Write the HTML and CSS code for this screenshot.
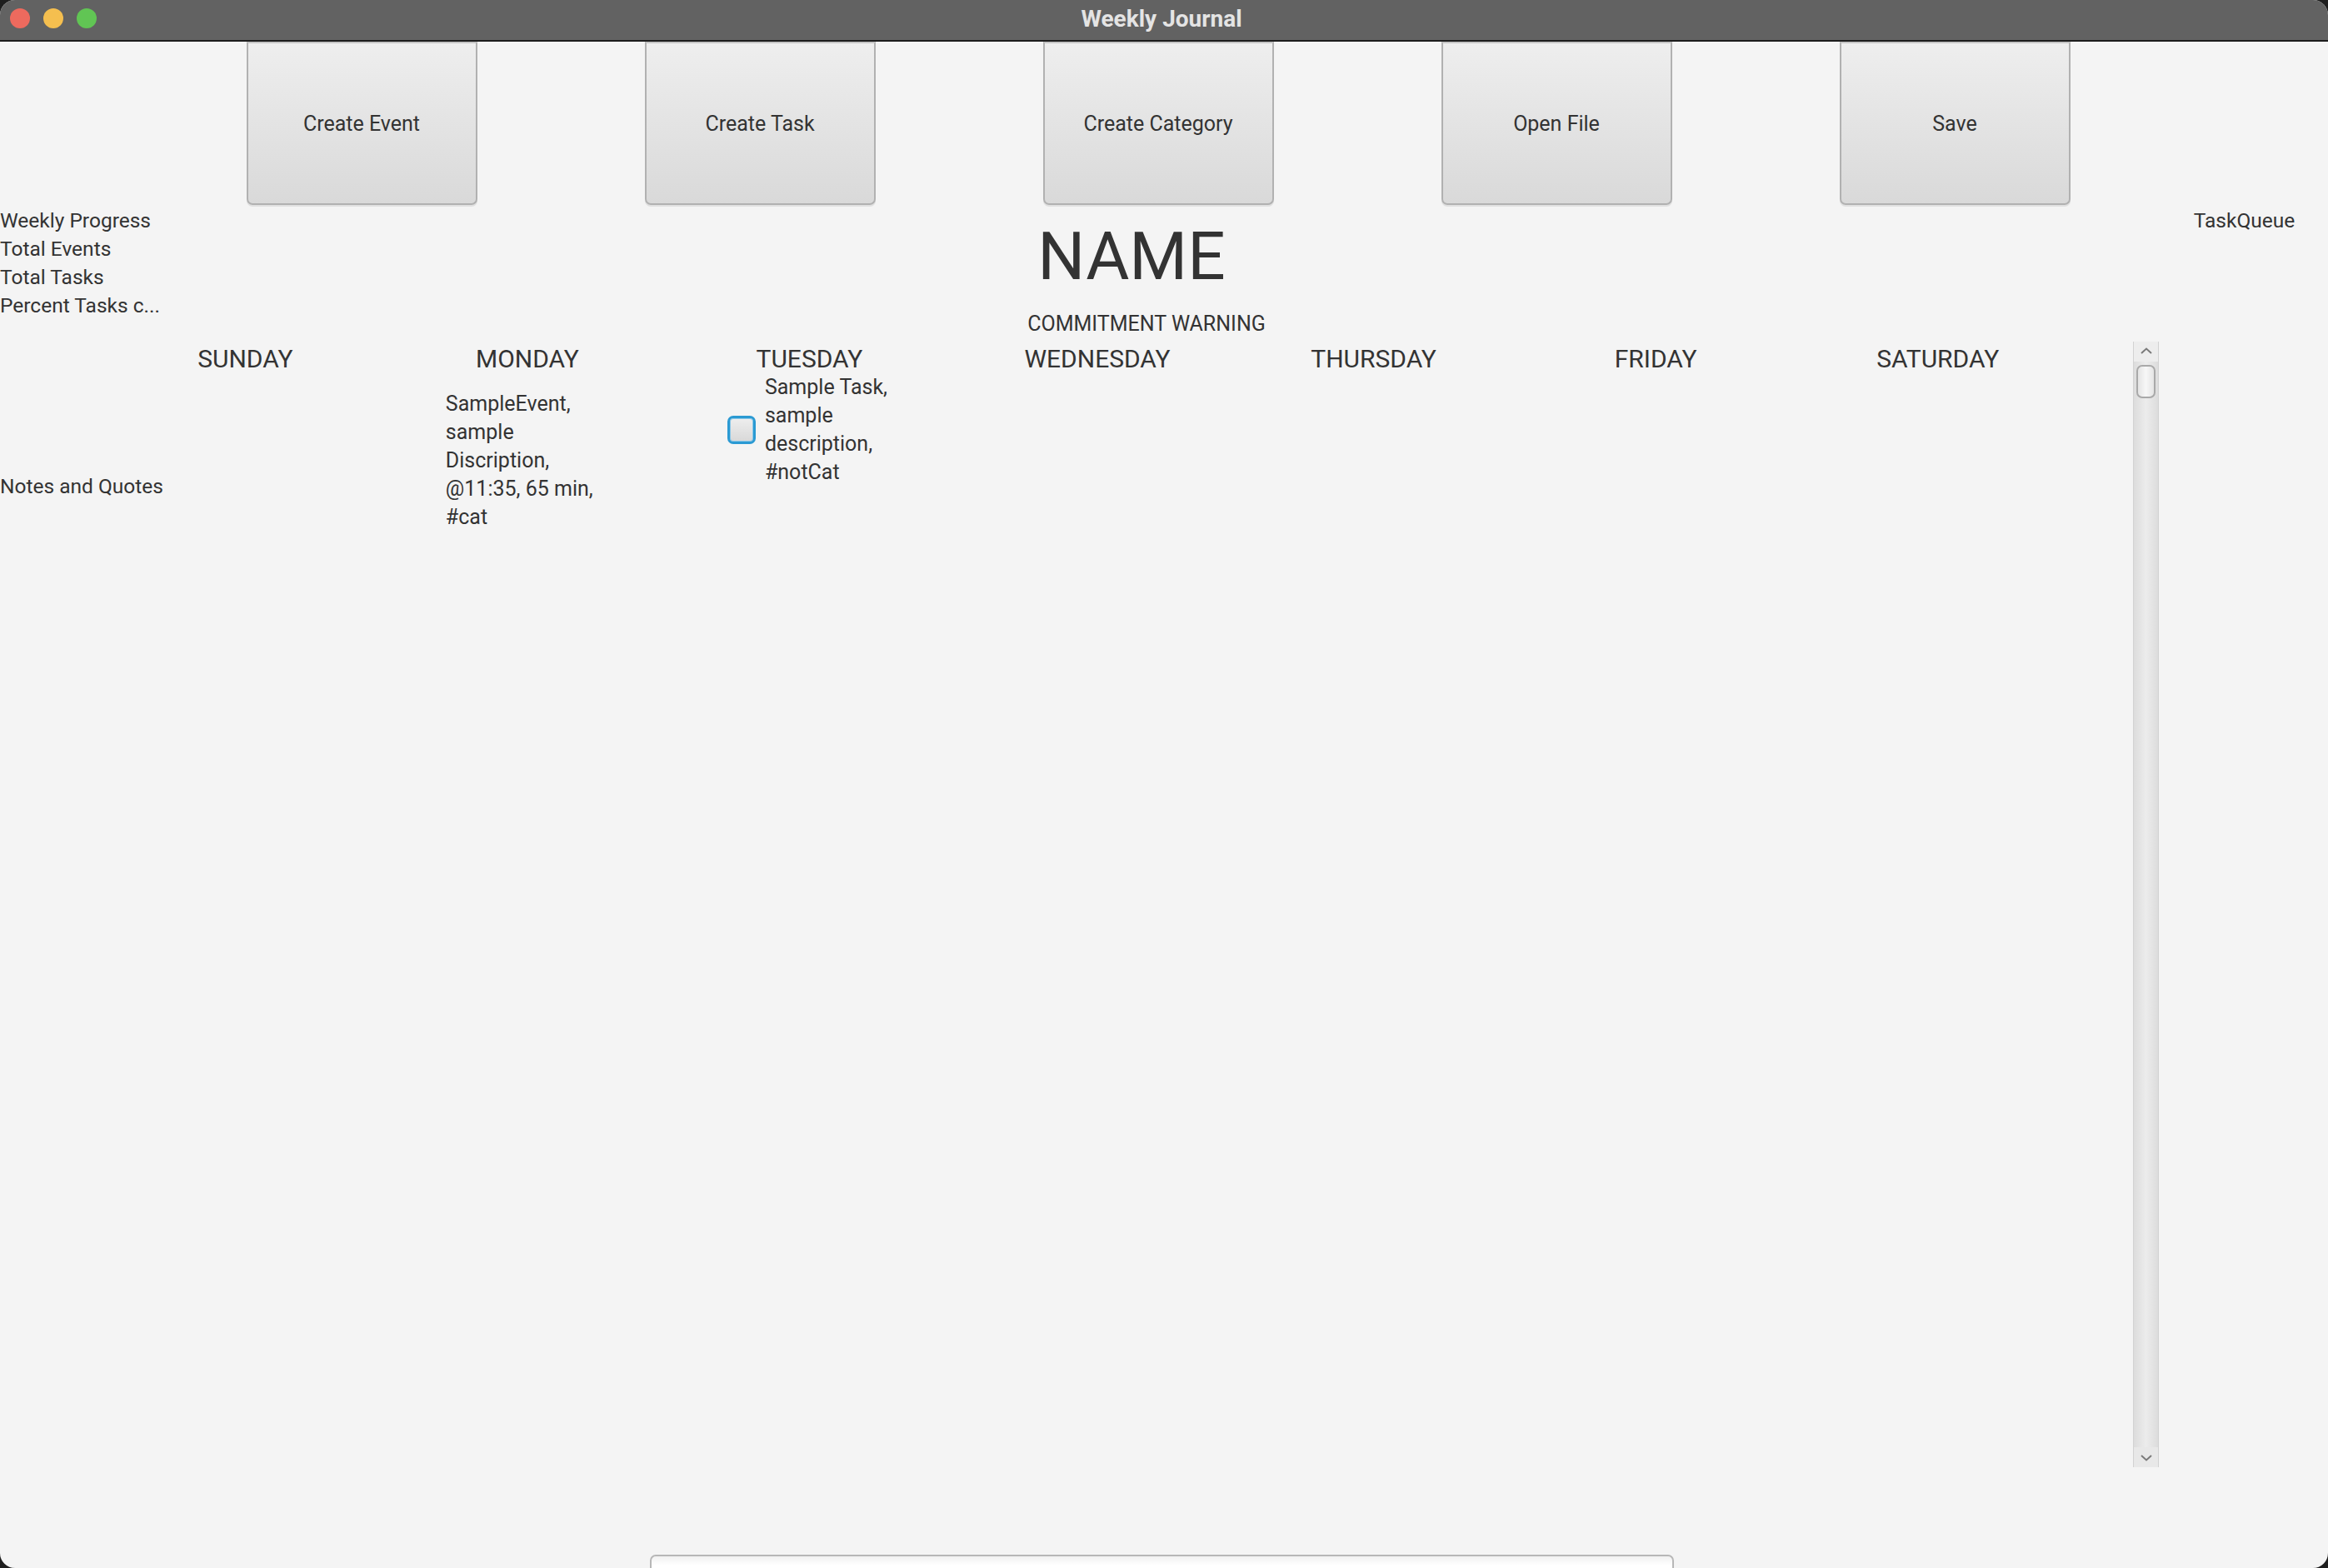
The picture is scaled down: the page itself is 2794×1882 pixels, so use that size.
FILE: index.html
```html
<!DOCTYPE html>
<html lang="en">
<head>
<meta charset="utf-8">
<title>Weekly Journal</title>
<link rel="stylesheet" href="styles.css">
</head>
<body>
<div class="window">
  <header class="titlebar">
    <div class="lights">
      <span class="light red"></span>
      <span class="light yellow"></span>
      <span class="light green"></span>
    </div>
    <div class="title">Weekly Journal</div>
    <div class="spacer"></div>
  </header>
  <div class="content">
    <nav class="toolbar">
      <button class="btn">Create Event</button>
      <button class="btn">Create Task</button>
      <button class="btn">Create Category</button>
      <button class="btn">Open File</button>
      <button class="btn">Save</button>
    </nav>
    <div class="main">
      <aside class="left">
        <div class="stats">
          <div class="label">Weekly Progress</div>
          <div class="label">Total Events</div>
          <div class="label">Total Tasks</div>
          <div class="label">Percent Tasks c...</div>
        </div>
        <div class="label notes">Notes and Quotes</div>
      </aside>
      <section class="center">
        <h1 class="name">NAME</h1>
        <div class="warning">COMMITMENT WARNING</div>
        <div class="scrollpane">
          <div class="week">
            <div class="day-head">SUNDAY</div>
            <div class="day-head">MONDAY</div>
            <div class="day-head">TUESDAY</div>
            <div class="day-head day-wide">WEDNESDAY</div>
            <div class="day-head">THURSDAY</div>
            <div class="day-head">FRIDAY</div>
            <div class="day-head">SATURDAY</div>
            <div class="day-cell"></div>
            <div class="day-cell">
              <div class="event">SampleEvent, sample Discription, @11:35, 65 min, #cat</div>
            </div>
            <div class="day-cell">
              <div class="task">
                <span class="checkbox"></span>
                <span class="task-text">Sample Task, sample description, #notCat</span>
              </div>
            </div>
            <div class="day-cell"></div>
            <div class="day-cell"></div>
            <div class="day-cell"></div>
            <div class="day-cell"></div>
          </div>
          <div class="scrollbar">
            <div class="arrow up">
              <svg width="14" height="8" viewBox="0 0 14 8"><polyline points="1,7 7,1.5 13,7" fill="none" stroke="#7a7a7a" stroke-width="2"/></svg>
            </div>
            <div class="thumb"></div>
            <div class="track"></div>
            <div class="arrow down">
              <svg width="14" height="8" viewBox="0 0 14 8"><polyline points="1,1 7,6.5 13,1" fill="none" stroke="#7a7a7a" stroke-width="2"/></svg>
            </div>
          </div>
        </div>
      </section>
      <aside class="right">
        <div class="label queue">TaskQueue</div>
      </aside>
    </div>
    <div class="footer">
      <div class="textfield"></div>
    </div>
  </div>
</div>
</body>
</html>
```
FILE: styles.css
```css
* { box-sizing: border-box; }

html, body {
  margin: 0;
  padding: 0;
  background: #1e1e1e;
}

body {
  width: 2794px;
  height: 1882px;
  overflow: hidden;
  font-family: "Roboto", "Liberation Sans", sans-serif;
  color: #333333;
}

.window {
  width: 2794px;
  height: 1882px;
  border-radius: 18px;
  overflow: hidden;
  display: flex;
  flex-direction: column;
  background: #f4f4f4;
}

.titlebar {
  height: 50px;
  flex: none;
  background: #626262;
  border-bottom: 2px solid #1c1c1c;
  display: grid;
  grid-template-columns: 1fr auto 1fr;
  align-items: center;
}

.lights {
  display: flex;
  gap: 16px;
  padding-left: 12px;
  padding-bottom: 4px;
}

.light {
  width: 24px;
  height: 24px;
  border-radius: 50%;
  display: block;
}
.red { background: #ed6a5e; }
.yellow { background: #f5bf4f; }
.green { background: #61c554; }

.title {
  font-weight: bold;
  font-size: 28px;
  color: #e4e4e4;
  padding-bottom: 4px;
  padding-right: 6px;
}

.content {
  flex: 1;
  display: flex;
  flex-direction: column;
  min-height: 0;
}

.toolbar {
  height: 196px;
  flex: none;
  display: flex;
  justify-content: center;
  gap: 201px;
  padding-right: 14px;
}

.btn {
  width: 277px;
  height: 196px;
  margin: 0;
  border: 2px solid #b1b1b1;
  border-top-color: #c4c4c4;
  border-radius: 0 0 7px 7px;
  background: linear-gradient(to bottom, #eeeeee, #d9d9d9);
  box-shadow: 0 2px 0 #e0e0e0;
  font-family: "Roboto", "Liberation Sans", sans-serif;
  font-size: 25px;
  color: #333333;
  padding: 0;
}

.main {
  flex: 1;
  display: grid;
  grid-template-columns: 125px 1fr 203px;
  min-height: 0;
}

.label {
  font-size: 24.5px;
  line-height: 34px;
  white-space: nowrap;
}

.left {
  width: 125px;
  padding-top: 2px;
}

.stats {
  width: 195px;
}

.notes {
  margin-top: 183px;
}

.center {
  display: flex;
  flex-direction: column;
  align-items: center;
  min-width: 0;
}

.name {
  margin: 22px 0 0 0;
  font-weight: normal;
  font-size: 80px;
  line-height: 80px;
  color: #333333;
}

.warning {
  margin-top: 24px;
  font-size: 25px;
  line-height: 34px;
  padding-left: 36px;
}

.scrollpane {
  margin-top: 4px;
  height: 1351px;
  align-self: stretch;
  display: flex;
}

.week {
  width: 2370px;
  flex: none;
  display: grid;
  grid-template-columns: repeat(7, 1fr);
  grid-template-rows: 40px auto;
  align-content: start;
}

.day-head {
  font-size: 30px;
  line-height: 38px;
  padding-top: 2px;
  text-align: center;
  white-space: nowrap;
}

.day-wide {
  padding-left: 14px;
}

.day-cell {
  display: flex;
  justify-content: center;
  align-items: flex-start;
}

.event {
  width: 192px;
  padding-top: 18px;
  padding-right: 2px;
  font-size: 25px;
  line-height: 34px;
  margin-left: -4px;
}

.task {
  display: flex;
  align-items: center;
  gap: 11px;
  width: 197px;
  margin-top: -2px;
}

.checkbox {
  width: 34px;
  height: 34px;
  flex: none;
  border: 3px solid #2b9ad3;
  border-radius: 7px;
  background: linear-gradient(to bottom, #eeeeee, #d8d8d8);
  box-shadow: inset 0 0 0 1px #8cc8e8;
}

.task-text {
  width: 152px;
  font-size: 25px;
  line-height: 34px;
}

.scrollbar {
  margin-left: auto;
  width: 31px;
  flex: none;
  display: flex;
  flex-direction: column;
  align-items: center;
  background: linear-gradient(to right, #dcdcdc, #ececec 50%, #dcdcdc);
  border-left: 1px solid #d2d2d2;
  border-right: 1px solid #d2d2d2;
}

.arrow {
  height: 24px;
  flex: none;
  display: flex;
  justify-content: center;
  align-items: center;
  width: 100%;
  background: #f0f0f0;
}
.arrow.up { align-items: flex-start; padding-top: 7px; background: #ededed; }
.arrow.down { align-items: flex-end; padding-bottom: 7px; background: #e8e8e8; }

.thumb {
  width: 23px;
  height: 40px;
  margin-top: 4px;
  flex: none;
  border: 2px solid #a9a9a9;
  border-radius: 7px;
  background: linear-gradient(to right, #e4e4e4, #f7f7f7 50%, #e4e4e4);
}

.track {
  flex: 1;
}

.right {
  display: flex;
  justify-content: center;
  align-items: flex-start;
  padding-top: 2px;
}

.queue {
  padding-left: 2px;
}

.footer {
  height: 16px;
  flex: none;
  overflow: hidden;
  display: flex;
  justify-content: center;
}

.textfield {
  width: 1229px;
  height: 40px;
  flex: none;
  border: 2px solid #b7b7b7;
  border-radius: 7px;
  background: linear-gradient(to bottom, #f1f1f1, #ffffff 30%);
  margin-left: -6px;
}
```
